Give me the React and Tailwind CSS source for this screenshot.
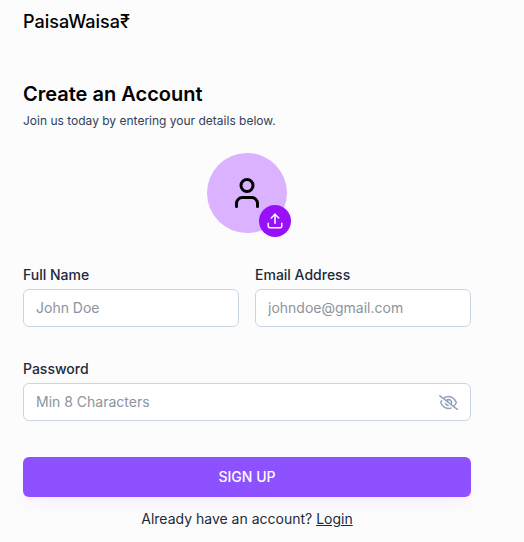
import React from "react";
import { LuUser, LuUpload } from "react-icons/lu";
import { FaRegEyeSlash } from "react-icons/fa6";

function Field({ label, placeholder, type = "text", children }) {
  return (
    <div>
      <label className="block text-[14px] leading-5 font-medium text-slate-800">{label}</label>
      <div className="mt-1 flex h-[38px] w-full items-center rounded-md border border-slate-300 bg-white px-3">
        <input
          type={type}
          placeholder={placeholder}
          className="w-full min-w-0 bg-transparent text-[14px] leading-5 outline-none placeholder:text-[#8d939c]"
        />
        {children}
      </div>
    </div>
  );
}

export default function App() {
  return (
    <div className="h-[542px] w-full overflow-hidden bg-[#fcfcfc] pl-[23px] pt-2 font-['Inter','Noto_Sans',sans-serif] text-black">
      <div className="w-[448px]">
        <h2 className="text-lg leading-7 font-medium">PaisaWaisa₹</h2>
        <h3 className="mt-11 text-xl leading-7 font-semibold">Create an Account</h3>
        <p className="mt-[5px] text-xs leading-4 text-slate-700">
          Join us today by entering your details below.
        </p>

        <form>
          <div className="mt-6 flex justify-center">
            <div className="relative flex size-20 items-center justify-center rounded-full bg-[#dab2ff]">
              <LuUser className="text-4xl" />
              <button
                type="button"
                className="absolute -right-1 -bottom-1 flex size-8 items-center justify-center rounded-full bg-[#9810fa] text-white"
              >
                <LuUpload size={18} />
              </button>
            </div>
          </div>

          <div className="mt-8 grid grid-cols-2 gap-4">
            <Field label="Full Name" placeholder="John Doe" />
            <Field label="Email Address" placeholder="johndoe@gmail.com" />
          </div>
          <div className="mt-8">
            <Field label="Password" placeholder="Min 8 Characters" type="password">
              <FaRegEyeSlash size={19} className="shrink-0 text-slate-400" />
            </Field>
          </div>

          <button
            type="button"
            className="mt-9 block h-10 w-full rounded-md bg-[#8e51ff] text-sm font-medium text-white shadow-lg shadow-purple-600/5"
          >
            SIGN UP
          </button>
          <p className="mt-3 text-center text-[14px] leading-5 text-slate-800">
            Already have an account?{" "}
            <a href="#" className="underline">
              Login
            </a>
          </p>
        </form>
      </div>
    </div>
  );
}
